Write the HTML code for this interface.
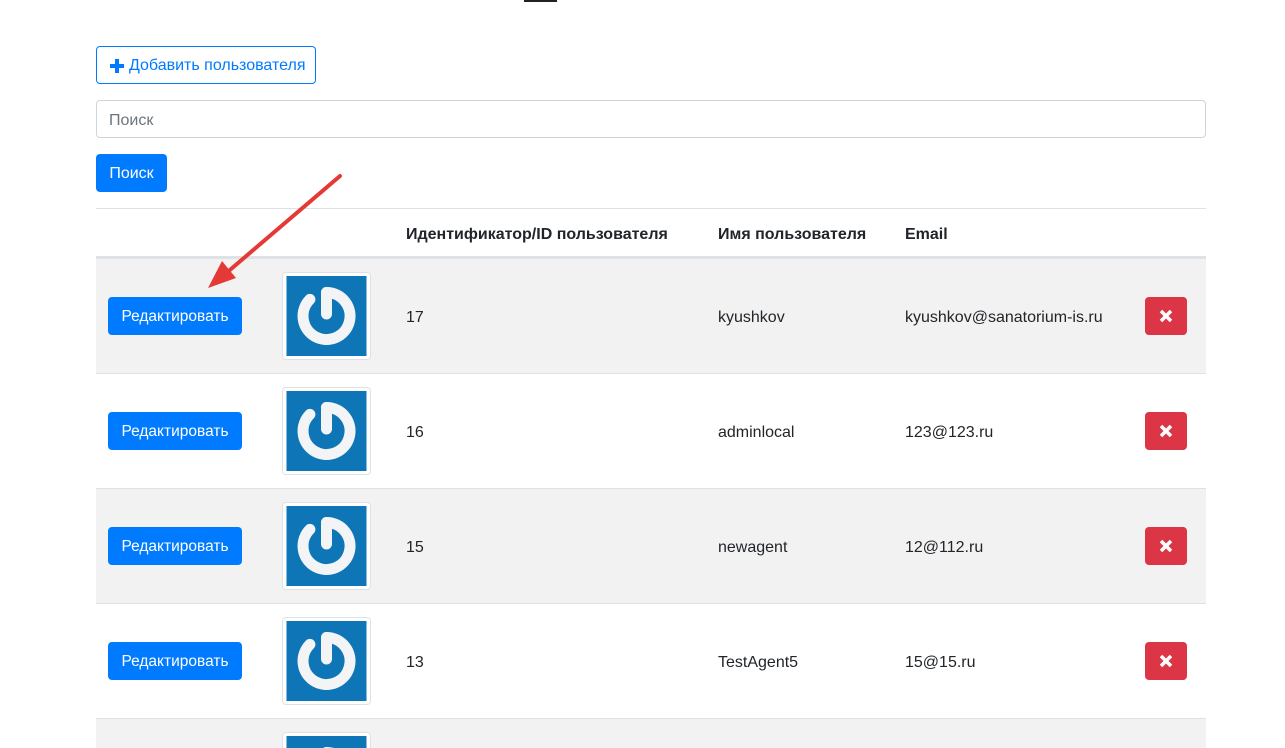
<!DOCTYPE html>
<html><head><meta charset="utf-8"><style>
*{box-sizing:border-box;margin:0;padding:0}
html,body{width:1285px;height:748px;overflow:hidden}
body{background:#fff;font-family:"Liberation Sans","DejaVu Sans",sans-serif;font-size:16px;color:#212529;position:relative}
.abs{position:absolute}
.btnp{position:absolute;background:#007bff;color:#fff;border-radius:4px;display:flex;align-items:center;justify-content:center;font-size:15.5px;padding-top:2px}
.row{position:absolute;left:96px;width:1110px;height:115px;border-top:1px solid #dee2e6;overflow:hidden}
.g{background:#f2f2f2}
.txt{position:absolute;top:50px;font-size:16px}
.thumb{position:absolute;left:186px;top:13px;width:89px;height:88px;background:#fff;border:1px solid #dee2e6;border-radius:4px;padding:3px}
.thumb svg{display:block}
.del{position:absolute;left:1049px;top:38px;width:42px;height:38px;background:#dc3545;border-radius:4px;display:flex;align-items:center;justify-content:center}
.edit{left:12px;top:38px;width:134px;height:38px}
</style></head><body>
<div class="abs" style="left:524px;top:0;width:33px;height:2px;background:#222"></div>
<div class="abs" style="left:96px;top:46px;width:220px;height:38px;border:1px solid #007bff;border-radius:4px;color:#007bff;display:flex;align-items:center;padding-left:12px;padding-top:2px;font-size:16px">
<svg width="16" height="16" viewBox="0 0 16 16" style="margin-right:4px"><path d="M6 1h4v5h5v4h-5v5H6v-5H1V6h5z" fill="#007bff"/></svg>Добавить пользователя</div>
<div class="abs" style="left:96px;top:100px;width:1110px;height:38px;border:1px solid #ced4da;border-radius:4px;color:#6c757d;padding-left:12px;line-height:40px;font-size:16px">Поиск</div>
<div class="btnp" style="left:96px;top:154px;width:71px;height:38px;font-size:16px">Поиск</div>
<div class="abs" style="left:96px;top:208px;width:1110px;height:50px;border-top:1px solid #dee2e6;border-bottom:2px solid #dee2e6;font-weight:bold;font-size:16px">
<span class="abs" style="left:310px;top:17px">Идентификатор/ID пользователя</span>
<span class="abs" style="left:622px;top:17px">Имя пользователя</span>
<span class="abs" style="left:809px;top:17px">Email</span>
</div>

<div class="row g" style="top:258px">
<div class="btnp edit">Редактировать</div>
<div class="thumb"><svg width="81" height="80" viewBox="0 0 80 80"><rect width="80" height="80" fill="#0e76b7"/><path d="M23.4 23.4A23.5 23.5 0 1 0 40 16.5" fill="none" stroke="#f2f4f6" stroke-width="11" stroke-linecap="round"/><path d="M40 16.5V38" stroke="#f2f4f6" stroke-width="11" stroke-linecap="round"/></svg></div>
<span class="txt" style="left:310px">17</span><span class="txt" style="left:622px">kyushkov</span><span class="txt" style="left:809px">kyushkov@sanatorium-is.ru</span>
<div class="del"><svg width="16" height="16" viewBox="0 0 16 16"><path d="M3 3L13 13M13 3L3 13" stroke="#fff" stroke-width="3.5"/></svg></div>
</div>
<div class="row" style="top:373px">
<div class="btnp edit">Редактировать</div>
<div class="thumb"><svg width="81" height="80" viewBox="0 0 80 80"><rect width="80" height="80" fill="#0e76b7"/><path d="M23.4 23.4A23.5 23.5 0 1 0 40 16.5" fill="none" stroke="#f2f4f6" stroke-width="11" stroke-linecap="round"/><path d="M40 16.5V38" stroke="#f2f4f6" stroke-width="11" stroke-linecap="round"/></svg></div>
<span class="txt" style="left:310px">16</span><span class="txt" style="left:622px">adminlocal</span><span class="txt" style="left:809px">123@123.ru</span>
<div class="del"><svg width="16" height="16" viewBox="0 0 16 16"><path d="M3 3L13 13M13 3L3 13" stroke="#fff" stroke-width="3.5"/></svg></div>
</div>
<div class="row g" style="top:488px">
<div class="btnp edit">Редактировать</div>
<div class="thumb"><svg width="81" height="80" viewBox="0 0 80 80"><rect width="80" height="80" fill="#0e76b7"/><path d="M23.4 23.4A23.5 23.5 0 1 0 40 16.5" fill="none" stroke="#f2f4f6" stroke-width="11" stroke-linecap="round"/><path d="M40 16.5V38" stroke="#f2f4f6" stroke-width="11" stroke-linecap="round"/></svg></div>
<span class="txt" style="left:310px">15</span><span class="txt" style="left:622px">newagent</span><span class="txt" style="left:809px">12@112.ru</span>
<div class="del"><svg width="16" height="16" viewBox="0 0 16 16"><path d="M3 3L13 13M13 3L3 13" stroke="#fff" stroke-width="3.5"/></svg></div>
</div>
<div class="row" style="top:603px">
<div class="btnp edit">Редактировать</div>
<div class="thumb"><svg width="81" height="80" viewBox="0 0 80 80"><rect width="80" height="80" fill="#0e76b7"/><path d="M23.4 23.4A23.5 23.5 0 1 0 40 16.5" fill="none" stroke="#f2f4f6" stroke-width="11" stroke-linecap="round"/><path d="M40 16.5V38" stroke="#f2f4f6" stroke-width="11" stroke-linecap="round"/></svg></div>
<span class="txt" style="left:310px">13</span><span class="txt" style="left:622px">TestAgent5</span><span class="txt" style="left:809px">15@15.ru</span>
<div class="del"><svg width="16" height="16" viewBox="0 0 16 16"><path d="M3 3L13 13M13 3L3 13" stroke="#fff" stroke-width="3.5"/></svg></div>
</div>
<div class="row g" style="top:718px;height:30px">
<div class="thumb"><svg width="81" height="80" viewBox="0 0 80 80"><rect width="80" height="80" fill="#0e76b7"/><path d="M23.4 23.4A23.5 23.5 0 1 0 40 16.5" fill="none" stroke="#f2f4f6" stroke-width="11" stroke-linecap="round"/><path d="M40 16.5V38" stroke="#f2f4f6" stroke-width="11" stroke-linecap="round"/></svg></div>
</div>

<svg class="abs" style="left:0;top:0" width="1285" height="748"><path d="M340 176L224 275" stroke="#e53935" stroke-width="4" stroke-linecap="round"/><path d="M208 288L222 261L236 278z" fill="#e53935"/></svg>
</body></html>
